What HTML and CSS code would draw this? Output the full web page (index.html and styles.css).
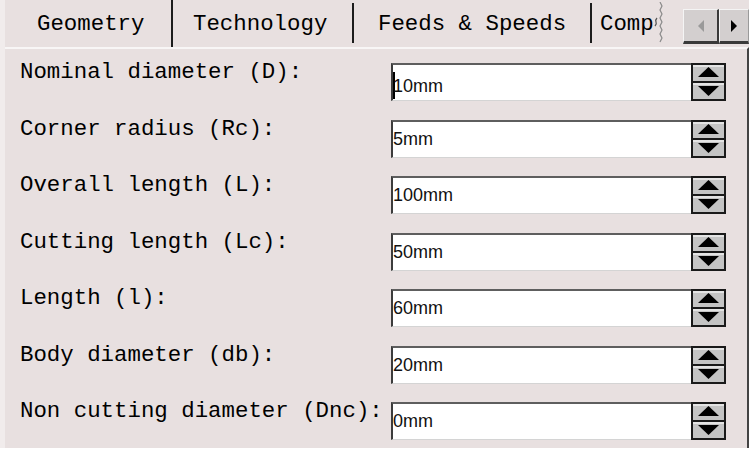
FILE: index.html
```html
<!DOCTYPE html>
<html>
<head>
<meta charset="utf-8">
<link rel="stylesheet" href="styles.css">
</head>
<body>
<div class="panel">
  <div class="tabs">
    <div class="tab tab-geo">Geometry</div>
    <div class="sep sep-tall"></div>
    <div class="tab tab-tech">Technology</div>
    <div class="sep"></div>
    <div class="tab tab-feeds">Feeds &amp; Speeds</div>
    <div class="sep"></div>
    <div class="tab tab-comp">Comp</div>
    <svg class="wave" width="10" height="42" viewBox="0 0 10 42"><path d="M3,16 q-2,2 -1,4 q1,2 -1,4" fill="none" stroke="#555" stroke-width="1.3"/><polyline points="6,0 8,4 6,8 8,12 6,16 8,20 6,24 8,28 6,32 8,36 6,40" fill="none" stroke="#8a8a8a" stroke-width="1.2"/></svg>
    <div class="scroll">
      <div class="sbtn sbtn-left"><svg width="10" height="14" viewBox="0 0 10 14"><polygon points="8,1 8,13 2,7" fill="#9a9a9a"/></svg></div>
      <div class="sbtn sbtn-right"><svg width="10" height="14" viewBox="0 0 10 14"><polygon points="2,1 2,13 8,7" fill="#000"/></svg></div>
    </div>
  </div>
  <div class="content">
    <div class="row"><div class="label">Nominal diameter (D):</div><div class="field"><div class="value"><span class="caret"></span>10mm</div><svg class="spin" width="35" height="38" viewBox="0 0 35 38"><rect width="35" height="38" fill="#1a1a1a"/><rect x="2" y="2" width="31" height="16" fill="#c4c4c4"/><rect x="2" y="2" width="31" height="2" fill="#e4e4e4"/><rect x="2" y="20" width="31" height="16" fill="#c4c4c4"/><rect x="2" y="20" width="31" height="2" fill="#e4e4e4"/><polygon points="17.5,4 7,14 28,14" fill="#000"/><polygon points="7,23 28,23 17.5,33" fill="#000"/></svg></div></div>
    <div class="row"><div class="label">Corner radius (Rc):</div><div class="field"><div class="value">5mm</div><svg class="spin" width="35" height="38" viewBox="0 0 35 38"><rect width="35" height="38" fill="#1a1a1a"/><rect x="2" y="2" width="31" height="16" fill="#c4c4c4"/><rect x="2" y="2" width="31" height="2" fill="#e4e4e4"/><rect x="2" y="20" width="31" height="16" fill="#c4c4c4"/><rect x="2" y="20" width="31" height="2" fill="#e4e4e4"/><polygon points="17.5,4 7,14 28,14" fill="#000"/><polygon points="7,23 28,23 17.5,33" fill="#000"/></svg></div></div>
    <div class="row"><div class="label">Overall length (L):</div><div class="field"><div class="value">100mm</div><svg class="spin" width="35" height="38" viewBox="0 0 35 38"><rect width="35" height="38" fill="#1a1a1a"/><rect x="2" y="2" width="31" height="16" fill="#c4c4c4"/><rect x="2" y="2" width="31" height="2" fill="#e4e4e4"/><rect x="2" y="20" width="31" height="16" fill="#c4c4c4"/><rect x="2" y="20" width="31" height="2" fill="#e4e4e4"/><polygon points="17.5,4 7,14 28,14" fill="#000"/><polygon points="7,23 28,23 17.5,33" fill="#000"/></svg></div></div>
    <div class="row"><div class="label">Cutting length (Lc):</div><div class="field"><div class="value">50mm</div><svg class="spin" width="35" height="38" viewBox="0 0 35 38"><rect width="35" height="38" fill="#1a1a1a"/><rect x="2" y="2" width="31" height="16" fill="#c4c4c4"/><rect x="2" y="2" width="31" height="2" fill="#e4e4e4"/><rect x="2" y="20" width="31" height="16" fill="#c4c4c4"/><rect x="2" y="20" width="31" height="2" fill="#e4e4e4"/><polygon points="17.5,4 7,14 28,14" fill="#000"/><polygon points="7,23 28,23 17.5,33" fill="#000"/></svg></div></div>
    <div class="row"><div class="label">Length (l):</div><div class="field"><div class="value">60mm</div><svg class="spin" width="35" height="38" viewBox="0 0 35 38"><rect width="35" height="38" fill="#1a1a1a"/><rect x="2" y="2" width="31" height="16" fill="#c4c4c4"/><rect x="2" y="2" width="31" height="2" fill="#e4e4e4"/><rect x="2" y="20" width="31" height="16" fill="#c4c4c4"/><rect x="2" y="20" width="31" height="2" fill="#e4e4e4"/><polygon points="17.5,4 7,14 28,14" fill="#000"/><polygon points="7,23 28,23 17.5,33" fill="#000"/></svg></div></div>
    <div class="row"><div class="label">Body diameter (db):</div><div class="field"><div class="value">20mm</div><svg class="spin" width="35" height="38" viewBox="0 0 35 38"><rect width="35" height="38" fill="#1a1a1a"/><rect x="2" y="2" width="31" height="16" fill="#c4c4c4"/><rect x="2" y="2" width="31" height="2" fill="#e4e4e4"/><rect x="2" y="20" width="31" height="16" fill="#c4c4c4"/><rect x="2" y="20" width="31" height="2" fill="#e4e4e4"/><polygon points="17.5,4 7,14 28,14" fill="#000"/><polygon points="7,23 28,23 17.5,33" fill="#000"/></svg></div></div>
    <div class="row"><div class="label">Non cutting diameter (Dnc):</div><div class="field"><div class="value">0mm</div><svg class="spin" width="35" height="38" viewBox="0 0 35 38"><rect width="35" height="38" fill="#1a1a1a"/><rect x="2" y="2" width="31" height="16" fill="#c4c4c4"/><rect x="2" y="2" width="31" height="2" fill="#e4e4e4"/><rect x="2" y="20" width="31" height="16" fill="#c4c4c4"/><rect x="2" y="20" width="31" height="2" fill="#e4e4e4"/><polygon points="17.5,4 7,14 28,14" fill="#000"/><polygon points="7,23 28,23 17.5,33" fill="#000"/></svg></div></div>
  </div>
</div>
</body>
</html>
```
FILE: styles.css
```css
html, body {
  margin: 0;
  padding: 0;
  background: #ffffff;
}
.panel {
  width: 744px;
  height: 448px;
  background: #e8e0e0;
  border-left: 5px solid #f1ecec;
  display: flex;
  flex-direction: column;
  font-family: "Liberation Mono", "Courier New", monospace;
  font-size: 22.4px;
  color: #000;
}
.tabs {
  height: 47px;
  display: flex;
  align-items: stretch;
  flex-shrink: 0;
}
.tab {
  box-sizing: border-box;
  padding-top: 12px;
  line-height: 25px;
  white-space: nowrap;
}
.tab-geo { width: 166px; padding-left: 32px; }
.tab-tech { width: 179px; padding-left: 20px; }
.tab-feeds { width: 236px; padding-left: 24px; }
.tab-comp { width: 62px; padding-left: 8px; }
.sep {
  width: 2px;
  background: #1c1c1c;
  margin: 3px 0 4px;
}
.sep-tall { margin: 0; }
.wave {
  margin-top: 2px;
  flex-shrink: 0;
}
.scroll {
  margin-left: auto;
  margin-top: 9px;
  height: 35px;
  width: 66px;
  display: flex;
}
.sbtn {
  box-sizing: border-box;
  height: 35px;
  background: #d3cfcf;
  border-top: 1px solid #f4f4f4;
  border-left: 1px solid #f4f4f4;
  border-bottom: 3px solid #3a3a3a;
  display: flex;
  align-items: center;
  justify-content: center;
}
.sbtn-left { width: 36px; border-right: 2px solid #3a3a3a; }
.sbtn-right { width: 30px; border-right: 1px solid #9a9a9a; }
.content {
  flex: 1;
  border-top: 2px solid #f8f6f6;
  border-right: 2px solid #444;
  padding: 11px 0 0 15px;
  display: flex;
  flex-direction: column;
}
.row {
  height: 56.5px;
  display: grid;
  grid-template-columns: 371px 335px;
  align-items: start;
}
.label {
  line-height: 25px;
  white-space: nowrap;
}
.field {
  margin-top: 3px;
  height: 38px;
  display: flex;
}
.value {
  flex: 1;
  box-sizing: border-box;
  height: 38px;
  background: #fff;
  border-top: 2px solid #5e5e5e;
  border-left: 2px solid #3c3c3c;
  border-bottom: 1px solid #d4d4d4;
  padding-top: 7px;
  font-family: "Liberation Sans", Arial, sans-serif;
  font-size: 18px;
  line-height: 21px;
  color: #111;
}
.caret {
  display: inline-block;
  width: 2px;
  height: 27px;
  background: #000;
  margin-right: -2px;
  vertical-align: -7px;
}
.spin {
  display: block;
  flex-shrink: 0;
}
```
